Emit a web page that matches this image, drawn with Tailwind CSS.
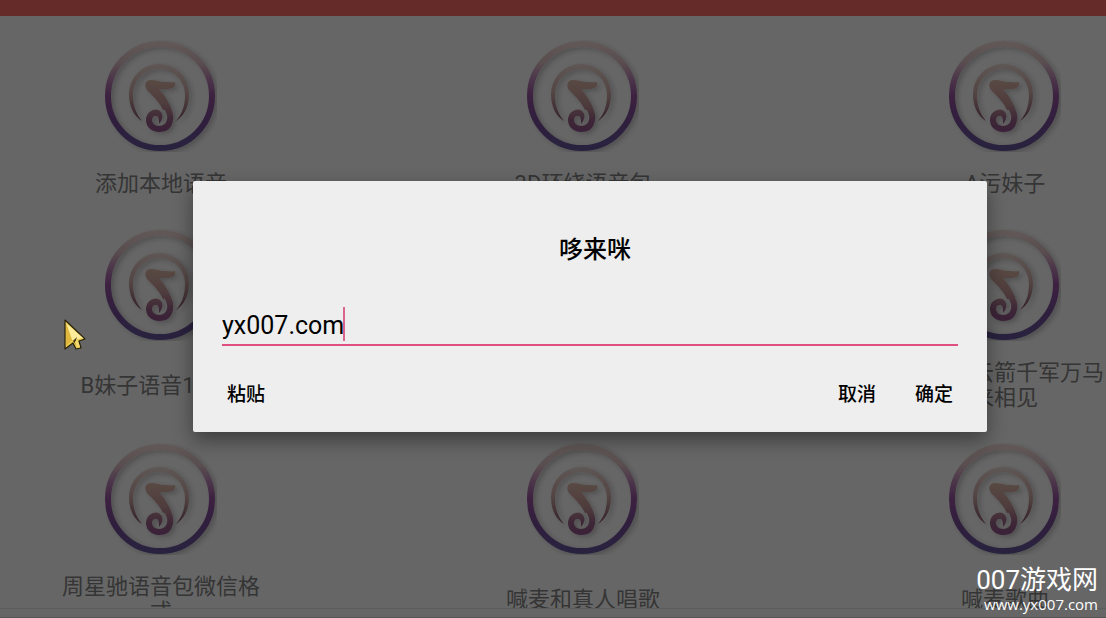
<!DOCTYPE html>
<html lang="zh-CN">
    <head>
        <meta charset="UTF-8">
        <meta name="viewport" content="width=device-width, initial-scale=1.0">
        <title>哆来咪</title>
        <script src="https://cdn.jsdelivr.net/npm/@tailwindcss/browser@4"></script>
    </head>
    <body class="relative h-screen overflow-hidden bg-white font-[Roboto,'Noto_Sans_CJK_SC',sans-serif]">
        <!-- shared logo -->
        <svg class="absolute size-0" aria-hidden="true">
            <defs>
                <linearGradient id="ring-color" gradientUnits="userSpaceOnUse" x1="56" y1="0" x2="56" y2="112">
                    <stop offset="0" stop-color="#f4e0dc" />
                    <stop offset="0.2" stop-color="#e0c2c6" />
                    <stop offset="0.36" stop-color="#bb83b8" />
                    <stop offset="0.5" stop-color="#9a52a2" />
                    <stop offset="0.75" stop-color="#754e99" />
                    <stop offset="1" stop-color="#64589f" />
                </linearGradient>
                <linearGradient id="arc-color" gradientUnits="userSpaceOnUse" x1="56" y1="23" x2="56" y2="85">
                    <stop offset="0" stop-color="#eddcd6" />
                    <stop offset="0.5" stop-color="#cfaaa6" />
                    <stop offset="1" stop-color="#76435f" />
                </linearGradient>
                <linearGradient id="note-color" gradientUnits="userSpaceOnUse" x1="56" y1="40" x2="56" y2="94">
                    <stop offset="0" stop-color="#dfb8a8" />
                    <stop offset="0.45" stop-color="#c49698" />
                    <stop offset="0.75" stop-color="#9a6088" />
                    <stop offset="1" stop-color="#90508f" />
                </linearGradient>
                <filter id="soft" filterUnits="userSpaceOnUse" x="-10" y="-10" width="140" height="140">
                    <feDropShadow dx="3" dy="2" stdDeviation="2.5" flood-color="#3a2a3a" flood-opacity="0.28" />
                </filter>
                <symbol id="logo" viewBox="0 0 112 112" overflow="visible">
                    <g filter="url(#soft)">
                        <circle cx="55" cy="56" r="52" fill="none" stroke="url(#ring-color)" stroke-width="6" />
                        <path fill="url(#arc-color)" d="M37 81 C29 76 24 67 24 54 A30 30 0 0 1 84 54 C84 67 79 76 71 81 C77 74 80 66 80 55 A26 26 0 0 0 28 55 C28 66 31 74 37 81Z" />
                        <path fill="url(#note-color)" d="M70 42 C71 47 67 49 62 49 L54 49 C58 54 62 59 66 68 L58 70 C55 63 49 57 43 51 C39 47 39 40 46 40 C51 40 55 42 60 42 C64 42 67 43 70 42Z" />
                        <path fill="none" stroke="url(#note-color)" stroke-width="6" d="M61 66 C65 72 66 76 65 80 C64 86 60 89 54 89 C48 89 44 85 44 80 C44 75 48 72 52 73" />
                        <path fill="url(#note-color)" d="M49 70 C56 68 61 76 54 84 C54 79 54 75 50 76Z" />
                    </g>
                </symbol>
            </defs>
        </svg>

        <div class="flex h-full flex-col">
            <header class="h-4 shrink-0 bg-[#fd6c66]"></header>
            <main class="flex min-h-0 flex-1 flex-col gap-[33px] overflow-hidden pt-6 pl-[60px] text-center text-[22px] leading-[25px] text-[#858585]">
                <div class="flex shrink-0 justify-between">
                    <div class="flex w-[202px] flex-col items-center gap-[19px]">
                        <svg class="size-28"><use href="#logo" /></svg>
                        <p>添加本地语音</p>
                    </div>
                    <div class="flex w-[202px] flex-col items-center gap-[19px]">
                        <svg class="size-28"><use href="#logo" /></svg>
                        <p>3D环绕语音包</p>
                    </div>
                    <div class="flex w-[202px] flex-col items-center gap-[19px]">
                        <svg class="size-28"><use href="#logo" /></svg>
                        <p>A污妹子</p>
                    </div>
                </div>
                <div class="flex shrink-0 justify-between">
                    <div class="flex w-[202px] flex-col items-center gap-[19px]">
                        <svg class="size-28"><use href="#logo" /></svg>
                        <p class="flex h-[50px] items-center">B妹子语音100句</p>
                    </div>
                    <div class="flex w-[202px] flex-col items-center gap-[19px]">
                        <svg class="size-28"><use href="#logo" /></svg>
                    </div>
                    <div class="flex w-[202px] flex-col items-center gap-[19px]">
                        <svg class="size-28"><use href="#logo" /></svg>
                        <p class="flex h-[50px] items-center">一支穿云箭千军万马来相见</p>
                    </div>
                </div>
                <div class="flex shrink-0 justify-between">
                    <div class="flex w-[202px] flex-col items-center gap-[19px]">
                        <svg class="size-28"><use href="#logo" /></svg>
                        <p class="flex h-[50px] items-center">周星驰语音包微信格式</p>
                    </div>
                    <div class="flex w-[202px] flex-col items-center gap-[19px]">
                        <svg class="size-28"><use href="#logo" /></svg>
                        <p class="flex h-[50px] items-center">喊麦和真人唱歌</p>
                    </div>
                    <div class="flex w-[202px] flex-col items-center gap-[19px]">
                        <svg class="size-28"><use href="#logo" /></svg>
                        <p class="flex h-[50px] items-center">喊麦歌曲</p>
                    </div>
                </div>
            </main>
            <footer class="h-[10px] shrink-0 border-t border-b border-t-[#e6e6e6] border-b-[#d8d0d0] bg-white"></footer>
        </div>

        <!-- dialog -->
        <div class="absolute inset-0 bg-black/60 pt-[181px] pr-[119px] pl-[193px]">
            <form role="dialog" aria-labelledby="dialog-title" class="rounded-xs bg-[#eeeeee] px-[29px] pt-[51px] pb-[18px] text-black shadow-[0_8px_20px_rgba(0,0,0,0.4)]">
                <h1 id="dialog-title" class="pl-[10px] text-center text-2xl leading-9 font-medium">哆来咪</h1>
                <div class="relative mt-[35px]">
                    <input type="text" aria-labelledby="dialog-title" value="yx007.com" class="block h-[43px] w-full border-b-2 border-[#e0507f] pt-1 text-[25px] outline-none">
                    <span class="absolute top-1 left-[121px] h-[34px] w-0.5 bg-[#d8668a]"></span>
                </div>
                <div class="mt-[30px] flex gap-[39px] px-[5px] text-[19px] leading-[38px] font-medium">
                    <button type="button" class="mr-auto">粘贴</button>
                    <button type="button">取消</button>
                    <button type="button">确定</button>
                </div>
            </form>
        </div>

        <!-- pointer -->
        <svg class="absolute top-[318px] left-[63px] h-8 w-6" viewBox="0 0 24 32">
            <path d="M2 2 L22 21 L16 23 L18 30 L13 31 L10 25 L2 31Z" fill="#e9c94d" stroke="#27200a" stroke-width="1.2" stroke-linejoin="round" />
            <path d="M3 5 L20 20 L9 22Z" fill="#fbec9b" />
            <path d="M3 5 L9 22 L3 28Z" fill="#dfb83d" />
            <path d="M10 23 L14 19 L12 25 L15 29Z" fill="#3a300e" />
            <path d="M14 21 L17 29 L14 29 L12 24Z" fill="#f3da70" />
        </svg>

        <!-- watermark -->
        <div class="absolute right-2 bottom-1 text-right text-white">
            <p class="text-[26px] leading-7">007游戏网</p>
            <p class="font-['Open_Sans',sans-serif] text-[15px] leading-5">www.yx007.com</p>
        </div>
    </body>
</html>
